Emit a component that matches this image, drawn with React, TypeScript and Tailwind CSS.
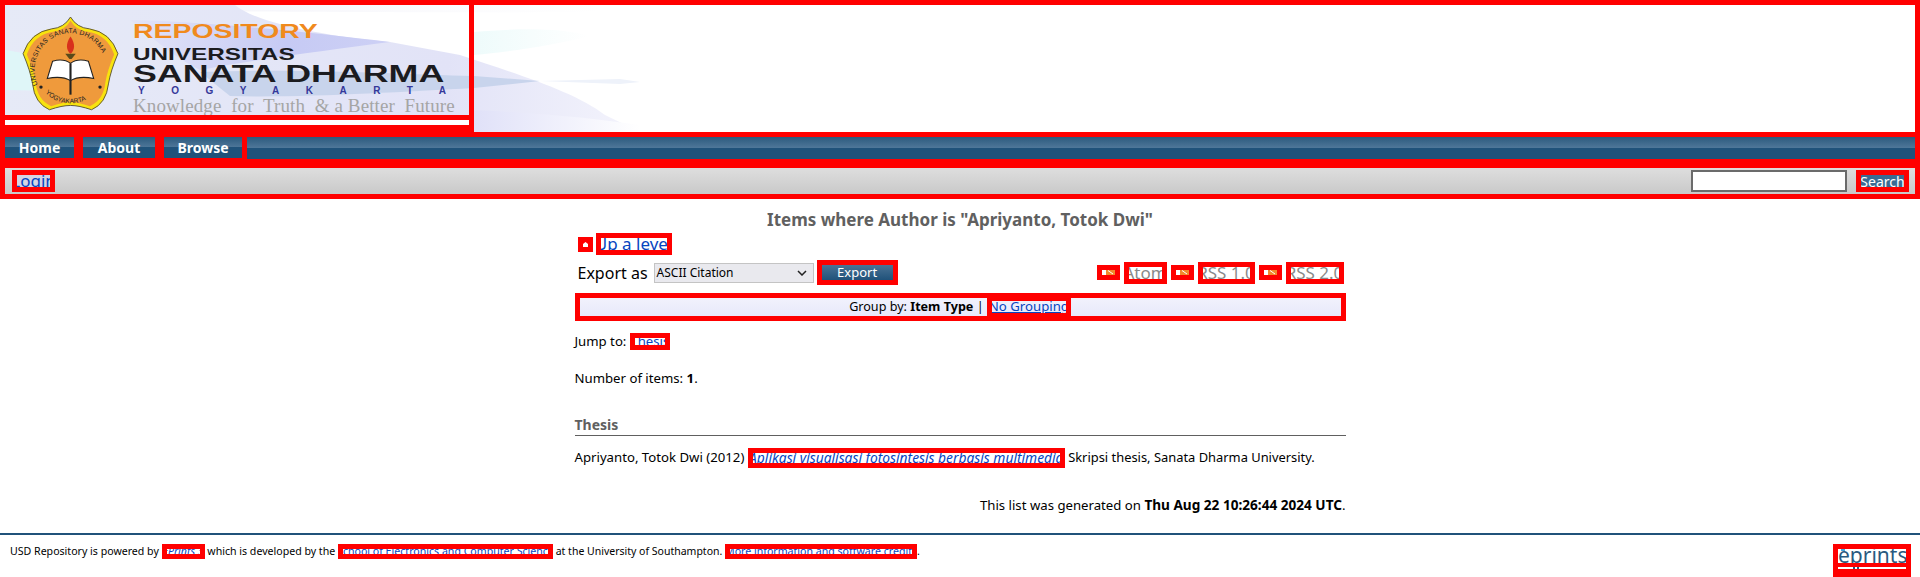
import React from "react";

const font = "font-['Noto_Sans',_'Open_Sans',_sans-serif]";
const redBox = "outline-5 -outline-offset-5 outline-[#ff0000]";
const navBg = "bg-[linear-gradient(#2c5a7e_0,#4f7799_50%,#20527a_50%,#20527a_100%)]";

const FeedIcon = () => (
  <span className="inline-flex h-[15px] w-[23px] items-center justify-center bg-[#ff0000]">
    <svg width="13" height="5" viewBox="0 0 13 5">
      <rect width="4" height="5" fill="#fff" />
      <rect x="4" width="9" height="5" fill="#f28a2c" />
      <path d="M6 0.5 L11 4" stroke="#fff" strokeWidth="1" />
    </svg>
  </span>
);

const Box = ({ className, children }: { className: string; children: React.ReactNode }) => (
  <span className={`overflow-hidden whitespace-nowrap ${redBox} ${className}`}>{children}</span>
);

const HeaderBackdrop = () => (
  <svg className="absolute left-0 top-0" width="1920" height="137" viewBox="0 0 1920 137">
    <defs>
      <linearGradient id="pale" x1="0" x2="1" y1="0" y2="0">
        <stop offset="0" stopColor="#e6eaf7" />
        <stop offset="0.7" stopColor="#e2e3f7" />
        <stop offset="1" stopColor="#f4f4fc" />
      </linearGradient>
      <linearGradient id="band" x1="0" x2="1" y1="0" y2="0">
        <stop offset="0" stopColor="#e2e4f8" />
        <stop offset="0.6" stopColor="#c6caf4" />
        <stop offset="1" stopColor="#cdd0f5" />
      </linearGradient>
      <linearGradient id="fade" x1="0" x2="1" y1="0" y2="0">
        <stop offset="0" stopColor="#dfe0f8" />
        <stop offset="1" stopColor="#ffffff" />
      </linearGradient>
      <linearGradient id="fadeCyan" x1="0" x2="1" y1="0" y2="0">
        <stop offset="0" stopColor="#eefbfb" />
        <stop offset="1" stopColor="#ffffff" />
      </linearGradient>
      <linearGradient id="topBand" x1="0" x2="1" y1="0" y2="0">
        <stop offset="0" stopColor="#f0f0f8" />
        <stop offset="1" stopColor="#ffffff" />
      </linearGradient>
    </defs>
    <rect width="1920" height="137" fill="#ffffff" />
    <path d="M0 5 H600 V12 C500 13 300 12 0 10 Z" fill="url(#topBand)" />
    <path d="M0 5 H235 C255 22 320 36 390 42 L460 55 C520 75 575 92 605 115 L640 132 H0 Z" fill="url(#pale)" />
    <path d="M130 20 C210 22 310 32 390 42 C330 50 250 60 200 70 C170 55 150 35 130 20 Z" fill="url(#band)" />
    <path d="M200 72 C300 68 400 74 474 76 L540 81 L474 88 C400 92 300 98 230 96 Z" fill="#c8d4ec" />
    <path d="M540 81 L620 79 L640 82 L620 84 Z" fill="#eef2fa" />
    <path d="M5 50 C60 58 110 78 100 92 L5 90 Z" fill="#dff6f8" />
    <path d="M474 32 C520 28 560 28 590 36 C560 44 510 52 474 55 Z" fill="url(#fadeCyan)" />
    <path d="M469 110 C530 112 590 118 640 125 V132 H469 Z" fill="url(#fade)" />
  </svg>
);

const Logo = () => (
  <svg className="shrink-0" width="97" height="96" viewBox="0 0 92 89" preserveAspectRatio="none">
    <path
      d="M46 0 Q52 10 64 11 Q84 14 91 34 Q84 50 82 62 Q80 80 66 86 Q54 82 46 82 Q38 82 26 86 Q12 80 10 62 Q8 50 1 34 Q8 14 28 11 Q40 10 46 0 Z"
      fill="#f8e30e"
      stroke="#4d4630"
      strokeWidth="0.8"
    />
    <g transform="translate(46 44) scale(0.92) translate(-46 -44)">
      <path
        d="M46 0 Q52 10 64 11 Q84 14 91 34 Q84 50 82 62 Q80 80 66 86 Q54 82 46 82 Q38 82 26 86 Q12 80 10 62 Q8 50 1 34 Q8 14 28 11 Q40 10 46 0 Z"
        fill="#ef9a3c"
      />
    </g>
    <path d="M46 18 C41 25 42 31 46 34 C50 31 51 25 46 18 Z" fill="#d8301c" />
    <path d="M41 34 H51 L47 39 H45 Z" fill="#5a4a1a" />
    <path d="M24 57 L29 41 C36 39 42 40 46 43 C50 40 56 39 63 41 L68 57 C58 55 51 56 46 59 C41 56 34 55 24 57 Z" fill="#ffffff" stroke="#222" strokeWidth="1" />
    <path d="M46 43 V72" stroke="#222" strokeWidth="2" />
    <circle cx="18" cy="65" r="1.6" fill="#222" />
    <circle cx="74" cy="65" r="1.6" fill="#222" />
    <path id="logo-top" d="M15 63 A34 34 0 1 1 77 63" fill="none" />
    <path id="logo-bottom" d="M20 68 A34 34 0 0 0 72 68" fill="none" />
    <text fontSize="6.4" fill="#222" letterSpacing="0.3" fontFamily="'Liberation Sans', sans-serif">
      <textPath href="#logo-top">UNIVERSITAS SANATA DHARMA</textPath>
    </text>
    <text fontSize="6.2" fill="#222" fontFamily="'Liberation Sans', sans-serif">
      <textPath href="#logo-bottom" startOffset="3">YOGYAKARTA</textPath>
    </text>
  </svg>
);

export default function App() {
  return (
    <div className={`${font} relative h-[577px] overflow-hidden bg-white text-[13.2px] text-black`}>
      {/* header */}
      <div className="relative h-[137px]">
        <HeaderBackdrop />
        <div className="relative flex h-[137px] w-[474px] flex-col">
          <div className={`flex h-[120px] gap-[14px] pl-[22px] pt-[21px] ${redBox}`}>
            <div className="-mt-[4px]"><Logo /></div>
            <div className="flex flex-col whitespace-nowrap font-['Liberation_Sans',_sans-serif] font-bold">
              <span className="origin-left scale-x-[1.42] text-[20px] leading-[20px] text-[#f08a1d]">REPOSITORY</span>
              <span className="mt-[5px] origin-left scale-x-[1.43] text-[17px] leading-[17px] text-[#1b1b20]">UNIVERSITAS</span>
              <span className="-mt-[1px] origin-left scale-x-[1.49] text-[24px] leading-[24px] text-[#1b1b20]">SANATA DHARMA</span>
              <span className="ml-[5px] text-[10px] leading-[10px] tracking-[26.5px] text-[#34389a]">YOGYAKARTA</span>
              <span className="font-['Liberation_Serif',_serif] text-[19px] font-normal leading-[20px] tracking-[0.1px] text-[#a5a5a5]">Knowledge&nbsp; for&nbsp; Truth&nbsp; &amp; a Better&nbsp; Future</span>
            </div>
          </div>
          <div className="flex h-[17px] flex-col bg-[#ff0000] px-[5px]">
            <div className="h-[5px] bg-white" />
          </div>
        </div>
        <div className="absolute inset-0 border-5 border-[#ff0000]" />
      </div>

      {/* nav */}
      <div className="flex h-[31px] gap-[9px] bg-[#ff0000] px-[5px]">
        {[
          ["Home", "w-[69px]"],
          ["About", "w-[72px]"],
          ["Browse", "w-[78px]"],
        ].map(([label, width]) => (
          <div key={label} className={`${width} ${navBg} flex h-[21px] items-center justify-center text-[14px] font-bold text-white`}>
            {label}
          </div>
        ))}
        <div className={`-ml-[4px] h-[22px] flex-1 ${navBg}`} />
      </div>

      {/* tool bar */}
      <div className={`relative -mt-[5px] flex h-[36px] items-start justify-between bg-[linear-gradient(#e2e2e2,#c5c5c5)] pl-[12px] pr-[11px] pt-[7px] ${redBox}`}>
        <Box className="flex h-[22px] w-[43px] items-center justify-center bg-[#d5d5e2] text-[17px] text-[#0645c0] underline">Login</Box>
        <div className="flex items-start gap-[9px]">
          <span className="h-[22px] w-[156px] border-2 border-[#6b6b6b] bg-white" />
          <Box className="flex h-[22px] w-[53px] items-center justify-center bg-[#3a6b93] text-[14px] text-white">Search</Box>
        </div>
      </div>

      {/* main */}
      <div className="mx-auto flex w-[771px] flex-col">
        <h1 className="mt-[9px] text-center text-[17px] font-bold leading-[24px] text-[#606060]">
          Items where Author is "Apriyanto, Totok Dwi"
        </h1>
        <div className="mt-[1px] flex h-[22px] items-center pl-[3px]">
          <span className="flex h-[15px] w-[15px] items-center justify-center bg-[#ff0000]">
            <svg width="5" height="5" viewBox="0 0 5 5"><path d="M2.5 0 L5 2 V5 H0 V2 Z" fill="#fff" /></svg>
          </span>
          <Box className="ml-[3px] flex h-[22px] w-[76px] items-center justify-center text-[17px] text-[#0645c0] underline">Up a level</Box>
        </div>
        <div className="mt-[5px] flex h-[25px] items-center pl-[3px]">
          <span className="text-[16px]">Export as</span>
          <span className="ml-[6px] flex h-[20px] w-[160px] items-center justify-between border border-[#c4c4c4] bg-[#e9e9ee] pl-[2px] pr-[6px] text-[12px]">
            ASCII Citation
            <svg width="10" height="6" viewBox="0 0 10 6" fill="none" stroke="#222" strokeWidth="1.5"><path d="M1 1 L5 5 L9 1" /></svg>
          </span>
          <Box className="ml-[3px] flex h-[25px] w-[81px] items-center justify-center bg-[linear-gradient(#f00_5px,#4a7295_5px,#20527a_20px)] text-[13px] text-white">Export</Box>
          <span className="ml-auto flex items-center gap-[4px] pr-[2px] text-[17px] text-[#8a8a8a]">
            <FeedIcon />
            <Box className="flex h-[22px] w-[43px] items-center justify-center underline">Atom</Box>
            <FeedIcon />
            <Box className="flex h-[22px] w-[57px] items-center justify-center underline">RSS 1.0</Box>
            <FeedIcon />
            <Box className="flex h-[22px] w-[58px] items-center justify-center underline">RSS 2.0</Box>
          </span>
        </div>
        <div className={`mt-[8px] flex h-[28px] items-center justify-center bg-[linear-gradient(#f4f4fd,#e5e6fa)] text-[12.6px] ${redBox}`}>
          <span className="whitespace-pre">Group by: <b>Item Type</b> | </span>
          <Box className="flex h-[22px] w-[84px] items-center justify-center text-[13.2px] text-[#0645c0] underline">No Grouping</Box>
        </div>
        <div className="mt-[12px] flex h-[17px] items-center whitespace-pre">
          Jump to: <Box className="flex h-[17px] w-[40px] items-center justify-center text-[#0645c0] underline">Thesis</Box>
        </div>
        <p className="mt-[18px] leading-[20px]">Number of items: <b>1</b>.</p>
        <h2 className="mt-[26px] h-[22px] border-b border-[#606060] pt-[1px] text-[14px] font-bold leading-[20px] text-[#606060]">Thesis</h2>
        <div className="mt-[12px] flex h-[20px] items-center whitespace-pre">
          Apriyanto, Totok Dwi (2012) <Box className="flex h-[20px] w-[317px] items-center justify-center text-[13.8px] italic text-[#0645c0] underline">Aplikasi visualisasi fotosintesis berbasis multimedia</Box><span className="whitespace-pre text-[12.9px]"> Skripsi thesis, Sanata Dharma University.</span>
        </div>
        <p className="mt-[27px] text-right leading-[20px]">This list was generated on <b className="text-[13.6px]">Thu Aug 22 10:26:44 2024 UTC</b>.</p>
      </div>

      {/* footer */}
      <div className="absolute inset-x-0 bottom-0 flex h-[44px] items-start justify-between border-t-2 border-[#20527a] pl-[10px] text-[10.6px]">
        <div className="mt-[9px] flex h-[15px] items-center whitespace-pre">
          USD Repository is powered by <Box className="flex h-[15px] w-[43px] items-center justify-center italic text-[#0645c0] underline">EPrints 3</Box> which is developed by the <Box className="flex h-[15px] w-[215px] items-center justify-center text-[#0645c0] underline">School of Electronics and Computer Science</Box><span className="whitespace-pre text-[10.5px]"> at the University of Southampton. </span><Box className="flex h-[15px] w-[192px] items-center justify-center text-[#0645c0] underline">More information and software credits</Box>.
        </div>
        <div className="relative mr-[9px] mt-[9px] flex h-[33px] w-[78px] flex-col overflow-hidden bg-[#ff0000] p-[5px]">
          <div className="relative h-[14px] overflow-hidden bg-white text-[21px] leading-[12px] text-[#2a5a80]">
            eprints
            <span className="absolute left-[3px] top-0 h-[2px] w-[4px] bg-[#45a5dc]" />
          </div>
          <div className="mt-[4px] flex h-[2px] gap-[2px] bg-white pl-[15px]">
            <span className="h-[2px] w-[2px] bg-[#2a5a80]" />
            <span className="h-[2px] w-[2px] bg-[#2a5a80]" />
          </div>
        </div>
      </div>
    </div>
  );
}
